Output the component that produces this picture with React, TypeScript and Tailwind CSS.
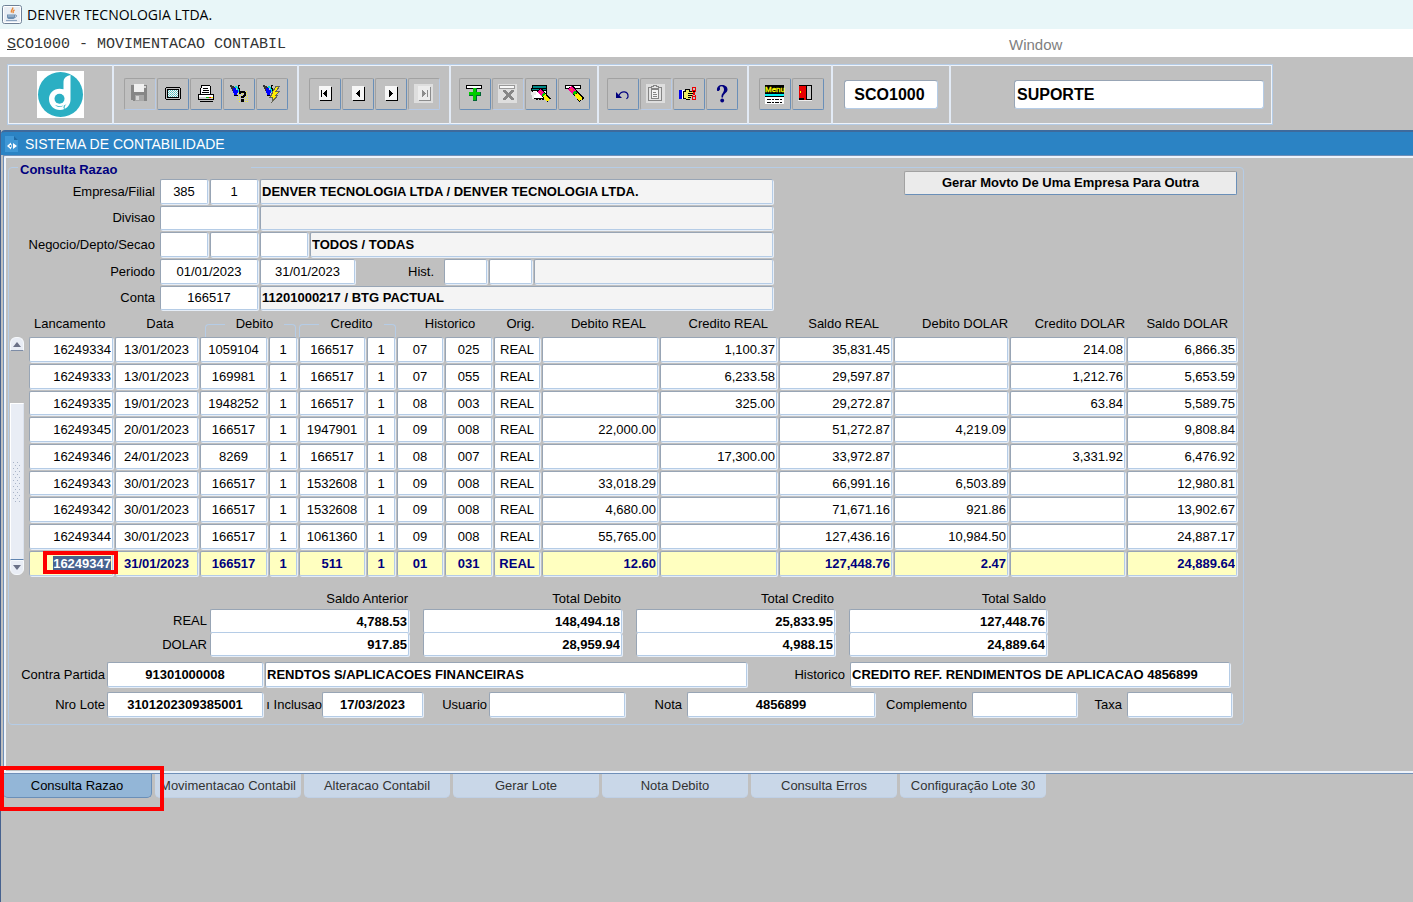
import { useState } from "react";
import type { ReactNode } from "react";
import clsx from "clsx";

type Align = "left" | "center" | "right";

const fieldBase =
  "block min-w-0 rounded-[2px] border border-t-[#98a5b5] border-l-[#98a5b5] border-r-[#b5cce6] border-b-[#b5cce6] px-px text-[13px] leading-4 shadow-[1px_1px_0_#e6eef8] outline-none";

function Field({
  label,
  value = "",
  align = "center",
  bold = false,
  readOnly = false,
  className = "",
}: {
  label: string;
  value?: string;
  align?: Align;
  bold?: boolean;
  readOnly?: boolean;
  className?: string;
}) {
  return (
    <input
      type="text"
      aria-label={label}
      defaultValue={value}
      readOnly={readOnly}
      className={clsx(
        fieldBase,
        readOnly ? "bg-[#f4f4f4]" : "bg-white",
        align === "center" && "text-center",
        align === "right" && "text-right",
        bold && "font-bold",
        className
      )}
    />
  );
}

function Icon({ children }: { children: ReactNode }) {
  return (
    <svg width="20" height="20" viewBox="0 0 20 20" shapeRendering="crispEdges" aria-hidden="true">
      {children}
    </svg>
  );
}

function ToolButton({
  label,
  disabled = false,
  children,
}: {
  label: string;
  disabled?: boolean;
  children: ReactNode;
}) {
  return (
    <button
      type="button"
      aria-label={label}
      title={label}
      disabled={disabled}
      className={clsx(
        "flex h-8 w-8 shrink-0 items-center justify-center rounded-[2px] border border-t-[#a2a2a2] border-l-[#a2a2a2]",
        disabled ? "border-r-[#b7cae6] border-b-[#b7cae6]" : "border-r-[#6a8fb8] border-b-[#6a8fb8]"
      )}
    >
      {children}
    </button>
  );
}

/* Icons */

function JavaIcon() {
  return (
    <svg width="20" height="19" viewBox="0 0 20 19" aria-hidden="true">
      <rect x="0.5" y="0.5" width="19" height="18" rx="2" fill="#e9eef4" stroke="#6f8197" />
      <rect x="1.5" y="1.5" width="17" height="16" rx="1" fill="none" stroke="#fff" />
      <path d="M10.500 2.500c1.500 1.500-2.500 2.800-1 5.200M12.500 5c-2 1.200-1.800 1.800-1 3.200" fill="none" stroke="#e8883a" strokeWidth="1.500" />
      <path d="M5 9.500h8v2.500c0 1.500-1.200 2-2.500 2h-3C6 14 5 13.500 5 12z" fill="#6f8fb0" />
      <path d="M13 10c2-.5 2.500 2-.5 2.500" fill="none" stroke="#6f8fb0" />
      <path d="M4 15.500h11" stroke="#8aa3bf" strokeWidth="1.200" />
      <path d="M6 11h6" stroke="#c8d6e6" strokeWidth="0.800" />
    </svg>
  );
}

function Logo() {
  return (
    <svg width="47" height="47" viewBox="0 0 47 47" role="img" aria-label="Denver">
      <rect width="47" height="47" fill="#fff" />
      <circle cx="23.500" cy="23.500" r="22.500" fill="#2bafc3" />
      <path
        d="M33.500 4C29 5 26.500 7 26.500 11.500v6.700C18.500 16 12 20.800 12 28c0 6.500 5 11 11 11 1.500 0 3-.3 4.500-1 3.500-1.800 6-5 6-9.500z"
        fill="#fff"
      />
      <circle cx="22.500" cy="27.800" r="5" fill="#2bafc3" />
      <path d="M18 34c2.500 2.500 6 2.500 9.500 0-1.500 2-1.500 3.500.5 4.200-1-2-.2-3.500 1.500-5.200-3 2.200-8 3-11.500 1z" fill="#2bafc3" />
    </svg>
  );
}

const SaveIcon = () => (
  <Icon>
    <path d="M1 1h16v16H3v-1H1z" fill="#868686" />
    <rect x="4" y="0" width="10" height="8" fill="#f0f0f0" />
    <rect x="14" y="2" width="2" height="2" fill="#d8d8d8" />
    <rect x="5" y="11" width="9" height="6" fill="#a8a8a8" />
    <rect x="6" y="12" width="3" height="4" fill="#d6d6d6" />
  </Icon>
);

const ScreenIcon = () => (
  <Icon>
    <path d="M3 3h14v1h1v11h-1v1H3v-1H2V4h1z" fill="#000" />
    <rect x="3" y="4" width="14" height="11" fill="#c0c0c0" />
    <rect x="4" y="5" width="12" height="9" fill="#000" />
    <rect x="5" y="6" width="10" height="7" fill="#f0ffff" />
    <path d="M5 6.500h10M5 8.500h10M5 10.500h10M5 12.500h10" stroke="#5bb" strokeDasharray="1 1" />
    <path d="M6 7.500h9M6 9.500h9M6 11.500h9" stroke="#8bb" strokeDasharray="1 1" />
  </Icon>
);

const PrintIcon = () => (
  <Icon>
    <path d="M5.500 1.500h8l1 1v8h-10v-4z" fill="#fff" stroke="#000" />
    <path d="M7 4.500h5M7 6.500h6M6 8.500h7" stroke="#000" />
    <rect x="2.500" y="10.500" width="15" height="5" fill="#d0d0d0" stroke="#000" />
    <rect x="3" y="11" width="14" height="2" fill="#fff" />
    <rect x="10" y="13" width="3" height="1" fill="#0b0" />
    <rect x="13" y="13" width="2" height="1" fill="#e00" />
    <rect x="15" y="13" width="2" height="1" fill="#ee0" />
    <path d="M4 17.500h13" stroke="#000" />
  </Icon>
);

const Torch = () => (
  <>
    <path d="M1 1h2v1h2v1h2v2H4v2H3V5H2V3H1z" fill="#333" />
    <path d="M4 4h3v2h2v3h-1v2H5V9H4z" fill="#00f" />
    <path d="M6 2h2v1h1v2h1v3H9V6H8V4H6z" fill="#0dd" />
    <path d="M9 1h2v1h-1v2h1v5h-1V5H9z" fill="#000" />
    <path d="M5 11h4v1H5z" fill="#000" />
  </>
);

const EnterQueryIcon = () => (
  <Icon>
    <path d="M11 7.500h8M9 9.500h10M8 11.500h11M8 13.500h11M8 15.500h11M10 17.500h9" stroke="#ee3" strokeDasharray="1 1" />
    <Torch />
    <path d="M10 10V8h1V7h5v1h1v4h-1v1h-1v1h-3v-2h2v-1h1V9h-3v1zM12 15h3v3h-3z" fill="#000" />
  </Icon>
);

const ExecuteQueryIcon = () => (
  <Icon>
    <Torch />
    <path d="M14 2h4l-4 5h4l-4 4h2l-6 7 1-5H8l3-4h-1z" fill="#fe0" stroke="#665" />
  </Icon>
);

function NavIcon({ dir, bar = false, muted = false }: { dir: "prev" | "next"; bar?: boolean; muted?: boolean }) {
  const ink = muted ? "#8c8c8c" : "#000";
  return (
    <Icon>
      {muted && <rect width="19" height="19" fill="#dedede" />}
      <rect x="5" y="3" width="12" height="14" fill={ink} />
      <rect x="4" y="2" width="12" height="14" fill={muted ? "#ececec" : "#f6f6f6"} />
      {dir === "prev" ? (
        <path d="M11 6h1v7h-1v-1h-1v-1H9v-1H8V9h1V8h1V7h1z" fill={ink} />
      ) : (
        <path d="M8 6h1v1h1v1h1v1h1v1h-1v1h-1v1H9v1H8z" fill={ink} />
      )}
      {bar && <rect x={dir === "prev" ? 6 : 13} y="6" width="1" height="7" fill={ink} />}
    </Icon>
  );
}

const InsertIcon = () => (
  <Icon>
    <rect x="1.500" y="1.500" width="15" height="3" fill="#fff" stroke="#000" />
    <path d="M8 4h4v4h4v4h-4v5H8v-5H4V8h4z" fill="#063" />
    <path d="M8 4h3v4h4v3h-4v5H8v-5H4V8h4z" fill="#0c0" />
  </Icon>
);

const RemoveIcon = () => (
  <Icon>
    <rect width="19" height="19" fill="#dedede" />
    <rect x="1.500" y="1.500" width="15" height="3" fill="#f8f8f8" stroke="#999" />
    <path d="M5 6h3v1h1v1h1v1h1V8h1V7h1V6h3v2h-1v1h-1v1h-1v2h1v1h1v1h1v2h-3v-1h-1v-1h-1v-1h-1v1H9v1H8v1H5v-2h1v-1h1v-1h1v-2H7V9H6V8H5z" fill="#868686" />
  </Icon>
);

/* pencil with a pink eraser, drawn from its top left end */
const Pencil = () => (
  <>
    <path d="M6 3l12 13" stroke="#000" strokeWidth="6" />
    <path d="M6 4l5 5" stroke="#f09" strokeWidth="5" />
    <path d="M7 5l2 2" stroke="#f44" strokeWidth="2" />
    <path d="M10 8l2 2" stroke="#0c0" strokeWidth="4" />
    <path d="M12 10l5 6" stroke="#fe0" strokeWidth="4" />
  </>
);

const ClearBlockIcon = () => (
  <Icon>
    <rect x="1.500" y="1.500" width="14" height="13" fill="#fff" stroke="#000" />
    <rect x="2" y="2" width="13" height="2" fill="#088" />
    <rect x="0.500" y="4.500" width="15" height="2" fill="#088" stroke="#000" />
    <path d="M0 8h5v3H3v4H1v-4H0z" fill="#e8e8e8" />
    <path d="M5 15.500h8" stroke="#000" strokeDasharray="2 1" />
    <g transform="translate(3 3) scale(.85)">
      <Pencil />
    </g>
  </Icon>
);

const ClearRecordIcon = () => (
  <Icon>
    <rect x="1.500" y="1.500" width="15" height="3" fill="#fff" stroke="#000" />
    <Pencil />
  </Icon>
);

const UndoIcon = () => (
  <svg width="20" height="20" viewBox="0 0 20 20" aria-hidden="true">
    <path d="M6 11.500C8 6.500 15.500 6.500 15 13l-1.500 2" fill="none" stroke="#00007e" strokeWidth="1.200" />
    <path d="M3 8v6h6z" fill="#00007e" />
  </svg>
);

const ClipboardIcon = () => (
  <Icon>
    <rect width="19" height="19" fill="#dedede" />
    <rect x="2.500" y="3.500" width="13" height="13" fill="#e4e4e4" stroke="#858585" />
    <path d="M5 2h2V1h4v1h2v3H5z" fill="#b4b4b4" />
    <path d="M5.500 4.500v-2h2v-1h3v1h2v2z" fill="#e4e4e4" stroke="#858585" />
    <rect x="5.500" y="5.500" width="7" height="9" fill="#f4f4f4" stroke="#858585" />
    <path d="M7 8.500h3M7 10.500h4M7 12.500h4" stroke="#858585" />
  </Icon>
);

const CutHandIcon = () => (
  <Icon>
    <rect x="0" y="6" width="3" height="9" fill="#00e" />
    <path d="M3 6h2v9H3z" fill="#fff" />
    <path d="M4 7h2V5h5v2h5v3h-3v2h-1v2h-1v2H7v-1H4z" fill="#000" />
    <path d="M5 8h2V6h3v2h5v1H9v1h4v1H9v1h3v1H9v1h2v1H7v-1H5z" fill="#ee6" />
    <path d="M13.500 3.500h3v3h-3zM13.500 12.500h3v3h-3zM13 7l4 5M13 12l4-5" fill="none" stroke="#e00" />
  </Icon>
);

const HelpIcon = () => (
  <svg width="20" height="20" viewBox="0 0 20 20" aria-hidden="true">
    <path d="M5 6.500C4.500 3 7 1 10 1s5.500 1.500 5.500 4.500c0 3.500-4.500 4-4.500 8H9.500c-.3-4.500 2.500-4.500 2.500-8C12 3.500 11 2.200 9.500 2.200 8 2.200 7.500 3 8 4.500c.5 2-2.500 3.500-3 2z" fill="#00007e" />
    <circle cx="10.200" cy="16.500" r="1.900" fill="#00007e" />
  </svg>
);

const MenuIcon = () => (
  <svg width="20" height="22" viewBox="0 0 20 22" aria-hidden="true">
    <rect x="0" y="2" width="19" height="9" fill="#000" />
    <text x="0" y="9" fontFamily="Liberation Sans, sans-serif" fontSize="8" fill="#ff0" stroke="#ff0" strokeWidth="0.300">
      Menu
    </text>
    <g shapeRendering="crispEdges">
      <rect x="0" y="11" width="19" height="2" fill="#0ee" />
      <rect x="0" y="13" width="19" height="8" fill="#fff" />
      <path d="M0 13.500h19" stroke="#000" />
      <path d="M2 16.500h16M2 19.500h16" stroke="#000" strokeDasharray="4 1 2 1" />
    </g>
  </svg>
);

const ExitIcon = () => (
  <Icon>
    <rect x="1" y="1" width="13" height="15" fill="#000" />
    <rect x="9" y="2" width="4" height="13" fill="#c9c9c9" />
    <path d="M1 2h6l2 2v12H6v-2H1z" fill="#e80000" />
    <rect x="2" y="7" width="1" height="2" fill="#ff0" />
    <path d="M8.500 3v13" stroke="#000" />
    <path d="M0 16.500h14" stroke="#eee" />
  </Icon>
);

function ToolGroup({ className, children }: { className: string; children: ReactNode }) {
  return (
    <div className={clsx("flex items-center gap-px border-r-2 border-[#e3ebf6]", className)}>
      {children}
    </div>
  );
}

function Toolbar() {
  return (
    <div
      role="toolbar"
      aria-label="Ferramentas"
      className="mx-[7px] mt-[7px] flex h-[61px] max-w-[1266px] border border-[#b5cce6] shadow-[inset_0_0_0_1px_#eef3fa]"
    >
      <ToolGroup className="w-[106px] justify-center">
        <Logo />
      </ToolGroup>
      <ToolGroup className="w-[185px] pb-[2px] pl-[10px]">
        <ToolButton label="Salvar" disabled><SaveIcon /></ToolButton>
        <ToolButton label="Tela"><ScreenIcon /></ToolButton>
        <ToolButton label="Imprimir"><PrintIcon /></ToolButton>
        <ToolButton label="Entrar consulta"><EnterQueryIcon /></ToolButton>
        <ToolButton label="Executar consulta"><ExecuteQueryIcon /></ToolButton>
      </ToolGroup>
      <ToolGroup className="w-[152px] pb-[2px] pl-[10px]">
        <ToolButton label="Primeiro"><NavIcon dir="prev" bar /></ToolButton>
        <ToolButton label="Anterior"><NavIcon dir="prev" /></ToolButton>
        <ToolButton label="Proximo"><NavIcon dir="next" /></ToolButton>
        <ToolButton label="Ultimo" disabled><NavIcon dir="next" bar muted /></ToolButton>
      </ToolGroup>
      <ToolGroup className="w-[148px] pb-[2px] pl-[8px]">
        <ToolButton label="Inserir registro"><InsertIcon /></ToolButton>
        <ToolButton label="Remover registro" disabled><RemoveIcon /></ToolButton>
        <ToolButton label="Limpar bloco"><ClearBlockIcon /></ToolButton>
        <ToolButton label="Limpar registro"><ClearRecordIcon /></ToolButton>
      </ToolGroup>
      <ToolGroup className="w-[150px] pb-[2px] pl-[8px]">
        <ToolButton label="Desfazer"><UndoIcon /></ToolButton>
        <ToolButton label="Colar" disabled><ClipboardIcon /></ToolButton>
        <ToolButton label="Recortar"><CutHandIcon /></ToolButton>
        <ToolButton label="Ajuda"><HelpIcon /></ToolButton>
      </ToolGroup>
      <ToolGroup className="w-[84px] pb-[2px] pl-[10px]">
        <ToolButton label="Menu"><MenuIcon /></ToolButton>
        <ToolButton label="Sair"><ExitIcon /></ToolButton>
      </ToolGroup>
      <ToolGroup className="w-[118px] justify-center">
        <input
          type="text"
          aria-label="Programa"
          defaultValue="SCO1000"
          className="h-[29px] w-[94px] rounded-[3px] border border-t-[#98a5b5] border-l-[#98a5b5] border-r-[#b5cce6] border-b-[#b5cce6] bg-white pr-[3px] text-center text-base font-bold outline-none"
        />
      </ToolGroup>
      <div className="flex flex-1 items-center pr-2 pl-[63px]">
        <input
          type="text"
          aria-label="Usuario conectado"
          defaultValue="SUPORTE"
          className="h-[29px] w-full rounded-[3px] border border-t-[#98a5b5] border-l-[#98a5b5] border-r-[#b5cce6] border-b-[#b5cce6] bg-white pl-[2px] text-base font-bold outline-none"
        />
      </div>
    </div>
  );
}

/* Consulta Razao */

const columns: { name: string; width: string; align: Align }[] = [
  { name: "Lancamento", width: "w-[86px]", align: "right" },
  { name: "Data", width: "w-[85px]", align: "center" },
  { name: "Conta debito", width: "w-[69px]", align: "center" },
  { name: "Filial debito", width: "w-[30px]", align: "center" },
  { name: "Conta credito", width: "w-[68px]", align: "center" },
  { name: "Filial credito", width: "w-[30px]", align: "center" },
  { name: "Historico", width: "w-[48px]", align: "center" },
  { name: "Sub historico", width: "w-[49px]", align: "center" },
  { name: "Origem", width: "w-[48px]", align: "center" },
  { name: "Debito REAL", width: "w-[118px]", align: "right" },
  { name: "Credito REAL", width: "w-[119px]", align: "right" },
  { name: "Saldo REAL", width: "w-[115px]", align: "right" },
  { name: "Debito DOLAR", width: "w-[116px]", align: "right" },
  { name: "Credito DOLAR", width: "w-[117px]", align: "right" },
  { name: "Saldo DOLAR", width: "w-[112px]", align: "right" },
];

const rows = [
  ["16249334", "13/01/2023", "1059104", "1", "166517", "1", "07", "025", "REAL", "", "1,100.37", "35,831.45", "", "214.08", "6,866.35"],
  ["16249333", "13/01/2023", "169981", "1", "166517", "1", "07", "055", "REAL", "", "6,233.58", "29,597.87", "", "1,212.76", "5,653.59"],
  ["16249335", "19/01/2023", "1948252", "1", "166517", "1", "08", "003", "REAL", "", "325.00", "29,272.87", "", "63.84", "5,589.75"],
  ["16249345", "20/01/2023", "166517", "1", "1947901", "1", "09", "008", "REAL", "22,000.00", "", "51,272.87", "4,219.09", "", "9,808.84"],
  ["16249346", "24/01/2023", "8269", "1", "166517", "1", "08", "007", "REAL", "", "17,300.00", "33,972.87", "", "3,331.92", "6,476.92"],
  ["16249343", "30/01/2023", "166517", "1", "1532608", "1", "09", "008", "REAL", "33,018.29", "", "66,991.16", "6,503.89", "", "12,980.81"],
  ["16249342", "30/01/2023", "166517", "1", "1532608", "1", "09", "008", "REAL", "4,680.00", "", "71,671.16", "921.86", "", "13,902.67"],
  ["16249344", "30/01/2023", "166517", "1", "1061360", "1", "09", "008", "REAL", "55,765.00", "", "127,436.16", "10,984.50", "", "24,887.17"],
  ["16249347", "31/01/2023", "166517", "1", "511", "1", "01", "031", "REAL", "12.60", "", "127,448.76", "2.47", "", "24,889.64"],
];

const totals = [
  { name: "Saldo Anterior", real: "4,788.53", dolar: "917.85" },
  { name: "Total Debito", real: "148,494.18", dolar: "28,959.94" },
  { name: "Total Credito", real: "25,833.95", dolar: "4,988.15" },
  { name: "Total Saldo", real: "127,448.76", dolar: "24,889.64" },
];

function FormRow({ label, className, children }: { label: string; className: string; children: ReactNode }) {
  return (
    <div className={clsx("flex items-stretch gap-[2px] pb-[2px]", className)}>
      <span className="mr-[3px] w-[146px] shrink-0 self-center text-right">{label}</span>
      {children}
    </div>
  );
}

function FilterForm() {
  return (
    <div className="w-[764px] pt-2">
      <FormRow label="Empresa/Filial" className="h-[27px]">
        <Field label="Empresa" value="385" className="w-12" />
        <Field label="Filial" value="1" className="w-12" />
        <Field label="Nome da empresa" value="DENVER TECNOLOGIA LTDA / DENVER TECNOLOGIA LTDA." align="left" bold readOnly className="flex-1" />
      </FormRow>
      <FormRow label="Divisao" className="h-[26px]">
        <Field label="Divisao" className="w-[98px]" />
        <Field label="Nome da divisao" readOnly className="flex-1" />
      </FormRow>
      <FormRow label="Negocio/Depto/Secao" className="h-[27px]">
        <Field label="Negocio" className="w-12" />
        <Field label="Depto" className="w-12" />
        <Field label="Secao" className="w-12" />
        <Field label="Nome do negocio" value="TODOS / TODAS" align="left" bold readOnly className="flex-1" />
      </FormRow>
      <FormRow label="Periodo" className="h-[27px]">
        <Field label="Periodo inicial" value="01/01/2023" className="w-[98px]" />
        <Field label="Periodo final" value="31/01/2023" className="w-[95px]" />
        <span className="w-[79px] self-center pr-[2px] text-right">Hist.</span>
        <Field label="Historico" className="ml-[6px] w-[43px]" />
        <Field label="Sub historico" className="w-[43px]" />
        <Field label="Nome do historico" readOnly className="flex-1" />
      </FormRow>
      <FormRow label="Conta" className="h-[26px]">
        <Field label="Conta" value="166517" className="w-[98px]" />
        <Field label="Nome da conta" value="11201000217 / BTG PACTUAL" align="left" bold readOnly className="flex-1" />
      </FormRow>
    </div>
  );
}

function ScrollBar() {
  return (
    <div className="flex w-5 shrink-0 flex-col pt-[25px] pl-px">
      <button type="button" aria-label="Rolar para cima" className="flex h-[14px] w-[14px] items-center justify-center rounded-t-md border border-[#f6f9fc] border-b-[#7d8ca6] bg-[#e9edf5]">
        <svg width="8" height="5" viewBox="0 0 8 5" aria-hidden="true"><path d="M4 0l4 5H0z" fill="#6b7187" /></svg>
      </button>
      <div className="h-[52px] w-[14px]" />
      <div className="flex h-[157px] w-[14px] items-center justify-center border border-t-white border-l-white border-r-[#dbe2ee] border-b-[#5f84b0] bg-[#e9edf5]">
        <svg width="8" height="44" viewBox="0 0 8 44" shapeRendering="crispEdges" aria-hidden="true">
          <path d="M0.500 2v42M4.500 2v42" stroke="#a9b4c8" strokeDasharray="1 5" />
          <path d="M2.500 5v38M6.500 5v38" stroke="#a9b4c8" strokeDasharray="1 5" />
        </svg>
      </div>
      <button type="button" aria-label="Rolar para baixo" className="flex h-[15px] w-[14px] items-center justify-center rounded-b-md border border-[#f6f9fc] bg-[#e9edf5]">
        <svg width="8" height="5" viewBox="0 0 8 5" aria-hidden="true"><path d="M4 5l4-5H0z" fill="#6b7187" /></svg>
      </button>
    </div>
  );
}

function BracketHeader({ children }: { children: ReactNode }) {
  return (
    <div className="flex h-full items-start">
      <span className="mt-3 h-[13px] w-5 rounded-tl-[4px] border-t border-l border-[#b5cce6]" />
      <span className="flex-1 pt-1 text-center">{children}</span>
      <span className="mt-3 h-[13px] w-3 rounded-tr-[4px] border-t border-r border-[#b5cce6]" />
    </div>
  );
}

function EntriesTable() {
  const th = "p-0 pb-px font-normal";
  return (
    <div className="flex">
      <ScrollBar />
      <table className="w-full max-w-[1210px] table-fixed border-collapse">
        <colgroup>
          {columns.map((c) => (
            <col key={c.name} className={c.width} />
          ))}
        </colgroup>
        <thead>
          <tr className="h-[25px]">
            <th className={clsx(th, "pl-[5px] text-left")}>Lancamento</th>
            <th className={clsx(th, "pl-[5px]")}>Data</th>
            <th colSpan={2} className="h-[25px] p-0 pr-[3px] pl-[5px] font-normal"><BracketHeader>Debito</BracketHeader></th>
            <th colSpan={2} className="h-[25px] p-0 pr-px font-normal"><BracketHeader>Credito</BracketHeader></th>
            <th colSpan={2} className={clsx(th, "pl-[9px]")}>Historico</th>
            <th className={clsx(th, "pl-[5px]")}>Orig.</th>
            <th className={clsx(th, "pr-[14px] text-right")}>Debito REAL</th>
            <th className={clsx(th, "pr-[11px] text-right")}>Credito REAL</th>
            <th className={clsx(th, "pr-[15px] text-right")}>Saldo REAL</th>
            <th className={clsx(th, "pr-[2px] text-right")}>Debito DOLAR</th>
            <th className={clsx(th, "pr-[2px] text-right")}>Credito DOLAR</th>
            <th className={clsx(th, "pr-[11px] text-right")}>Saldo DOLAR</th>
          </tr>
        </thead>
        <tbody>
          {rows.map((row, r) => {
            const current = r === rows.length - 1;
            return (
              <tr key={row[0]} className={r % 3 === 2 && !current ? "h-[26px]" : "h-[27px]"}>
                {row.map((value, c) => (
                  <td key={columns[c].name} className="p-0 pr-[2px] pb-[2px]">
                    {current && c === 0 ? (
                      <div className={clsx(fieldBase, "relative flex h-[25px] items-center justify-end bg-[#ffffc0]")}>
                        <input
                          type="text"
                          aria-label={columns[c].name}
                          defaultValue={value}
                          className="h-4 w-[58px] bg-[#47628f] text-right font-bold text-white outline-none"
                        />
                        {/* callout around the current entry */}
                        <span className="pointer-events-none absolute -top-px -right-[6px] h-[23px] w-[75px] border-4 border-[#fe0000]" />
                      </div>
                    ) : (
                      <Field
                        label={columns[c].name}
                        value={value}
                        align={columns[c].align}
                        bold={current}
                        className={clsx(
                          "w-full",
                          r % 3 === 2 && !current ? "h-6" : "h-[25px]",
                          current && "bg-[#ffffc0]! text-[#00007e]"
                        )}
                      />
                    )}
                  </td>
                ))}
              </tr>
            );
          })}
        </tbody>
      </table>
    </div>
  );
}

function TotalsTable() {
  return (
    <table className="mt-[11px] w-[1038px] table-fixed border-collapse">
      <thead>
        <tr className="h-5">
          <td className="w-[201px] p-0" />
          {totals.map((t, i) => (
            <th key={t.name} className={clsx("p-0 text-right font-normal", i < 3 ? "w-[213px] pr-[15px]" : "pr-px")}>
              {t.name}
            </th>
          ))}
        </tr>
      </thead>
      <tbody>
        {(["real", "dolar"] as const).map((kind) => (
          <tr key={kind} className="h-[23px]">
            <th className="p-0 pr-[3px] text-right font-normal">{kind.toUpperCase()}</th>
            {totals.map((t, i) => (
              <td key={t.name} className={clsx("p-0", i < 3 && "pr-[14px]")}>
                <Field
                  label={`${t.name} ${kind}`}
                  value={t[kind]}
                  align="right"
                  bold
                  className={clsx("w-full", kind === "real" ? "h-6" : "h-[23px] border-t-0")}
                />
              </td>
            ))}
          </tr>
        ))}
      </tbody>
    </table>
  );
}

function Details() {
  return (
    <div className="pt-[6px] pb-[6px]">
      <div className="flex h-[30px] items-start leading-[25px]">
        <span className="w-24 text-right">Contra Partida</span>
        <Field label="Contra Partida" value="91301000008" bold className="ml-[2px] h-[25px] w-[156px]" />
        <Field label="Nome da contra partida" value="RENDTOS S/APLICACOES FINANCEIRAS" align="left" bold className="ml-[2px] h-[25px] w-[482px]" />
        <span className="w-[98px] text-right">Historico</span>
        <Field label="Historico" value="CREDITO REF. RENDIMENTOS DE APLICACAO 4856899" align="left" bold className="ml-[5px] h-[25px] w-[380px]" />
      </div>
      <div className="flex h-[26px] items-start leading-[25px]">
        <span className="w-24 text-right">Nro Lote</span>
        <Field label="Nro Lote" value="3101202309385001" bold className="ml-[2px] h-[25px] w-[156px]" />
        <span className="w-[59px] text-right whitespace-nowrap">ı Inclusao</span>
        <Field label="Data Inclusao" value="17/03/2023" bold className="h-[25px] w-[101px]" />
        <span className="w-16 text-right">Usuario</span>
        <Field label="Usuario" className="ml-[2px] h-[25px] w-[136px]" />
        <span className="w-[57px] text-right">Nota</span>
        <Field label="Nota" value="4856899" bold className="ml-[5px] h-[25px] w-[188px]" />
        <span className="w-[92px] text-right">Complemento</span>
        <Field label="Complemento" className="ml-[5px] h-[25px] w-[105px]" />
        <span className="w-[45px] text-right">Taxa</span>
        <Field label="Taxa" className="ml-[5px] h-[25px] w-[105px]" />
      </div>
    </div>
  );
}

const tabs = [
  "Consulta Razao",
  "Movimentacao Contabil",
  "Alteracao Contabil",
  "Gerar Lote",
  "Nota Debito",
  "Consulta Erros",
  "Configuração Lote 30",
];

export default function App() {
  const [activeTab, setActiveTab] = useState(tabs[0]);

  return (
    <div className="flex min-h-screen flex-col bg-[#c0c0c0] font-['Liberation_Sans',Arial,sans-serif] text-[13px] leading-4 text-black">
      <header className="flex h-[29px] items-center gap-[5px] bg-[#e8f6f8] pl-[2px]">
        <JavaIcon />
        <h1 className="font-['Open_Sans','Noto_Sans',sans-serif] text-[14px]">DENVER TECNOLOGIA LTDA.</h1>
      </header>

      <nav className="flex h-7 items-center bg-white pt-[3px]">
        <a href="#sco1000" className="w-[1009px] pl-[7px] font-['Liberation_Mono',monospace] text-[15px] text-[#333]">
          <span className="underline">S</span>CO1000 - MOVIMENTACAO CONTABIL
        </a>
        <a href="#window" className="text-[15px] text-[#808080]">Window</a>
      </nav>

      <Toolbar />

      <main className="mt-[5px] flex flex-1 flex-col border-l border-[#47628f]">
        <div className="flex h-[25px] items-center rounded-tl-[4px] border-t-2 border-[#3e6a9c] bg-[#2b83c4] pl-1">
          <svg width="14" height="16" viewBox="0 0 14 16" aria-hidden="true">
            <path d="M0 0h9l4 4v12H0z" fill="#3f97d6" />
            <path d="M9 0v4h4z" fill="#1f6aa5" />
            <path d="M6 6.500L2 10l4 3.500v-2h1v-3H6zM8 7v6l4-3z" fill="#fff" />
            <circle cx="5.500" cy="10" r="1" fill="#2b83c4" />
          </svg>
          <h2 className="pl-[6px] text-[14px] text-white">SISTEMA DE CONTABILIDADE</h2>
        </div>

        <div className="ml-[2px] border-t border-b border-l border-[#6f8fb8]">
          <div className="min-h-[617px] rounded-tl-[2px] border-t-2 border-b-2 border-l-2 border-[#eef3fa] pt-[6px] pl-[2px]">
            <fieldset className="max-w-[1236px] min-w-0 rounded-[4px] border border-[#b5cce6]">
              <legend className="ml-[9px] h-[7px] w-[233px] pl-[2px] leading-[11px] font-bold text-[#00007e]">
                Consulta Razao
              </legend>
              <div className="flex items-start justify-between pr-[6px]">
                <FilterForm />
                <button
                  type="button"
                  className="h-6 w-[333px] rounded-[2px] border border-t-[#a2a2a2] border-l-[#a2a2a2] border-r-[#6a8fb8] border-b-[#6a8fb8] bg-[#ebebeb] font-bold"
                >
                  Gerar Movto De Uma Empresa Para Outra
                </button>
              </div>
              <EntriesTable />
              <TotalsTable />
              <Details />
            </fieldset>
          </div>
        </div>

        <div role="tablist" className="relative flex gap-[3px] pl-[2px]">
          {tabs.map((tab) => (
            <button
              key={tab}
              type="button"
              role="tab"
              aria-selected={tab === activeTab}
              onClick={() => setActiveTab(tab)}
              className={clsx(
                "h-6 w-[146px] rounded-b-[5px] whitespace-nowrap first:w-[149px]",
                tab === activeTab
                  ? "border-r border-b border-[#6a8fb8] bg-[#93b6d7] text-black"
                  : "border-b border-[#bfd0e6] bg-[#c9d7e8] text-[#333]"
              )}
            >
              {tab}
            </button>
          ))}
          {/* callout around the active tab */}
          <span className="pointer-events-none absolute -top-2 -left-px h-[45px] w-[164px] border-4 border-[#fe0000]" />
        </div>
      </main>
    </div>
  );
}
